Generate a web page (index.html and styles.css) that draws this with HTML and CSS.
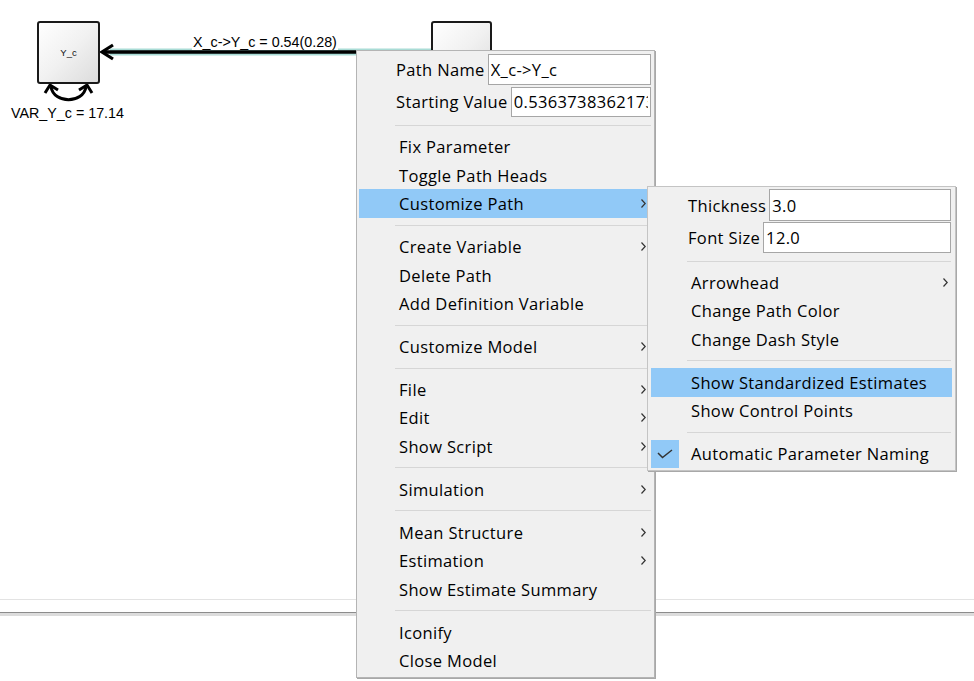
FILE: index.html
```html
<!DOCTYPE html>
<html lang="en">
<head>
<meta charset="utf-8">
<title>Path Menu</title>
<link rel="stylesheet" href="styles.css">
</head>
<body>
<div class="app">
  <div class="canvas">
    <svg class="paths" width="974" height="599" viewBox="0 0 974 599">
      <line x1="110" y1="52" x2="432" y2="52" stroke="#a9dcd6" stroke-width="7"/>
      <line x1="102" y1="52" x2="432" y2="52" stroke="#000" stroke-width="3.6"/>
      <polyline points="113,45 102,52 113,59" fill="none" stroke="#000" stroke-width="3.2"/>
      <path d="M51 87 C 54 104, 83 104, 86 87" fill="none" stroke="#000" stroke-width="3"/>
      <polyline points="45,93 50,85 58,90" fill="none" stroke="#000" stroke-width="3"/>
      <polyline points="79,90 87,85 92,93" fill="none" stroke="#000" stroke-width="3"/>
    </svg>
    <div class="node node-y"><span class="node-name">Y_c</span></div>
    <div class="node node-x"><span class="node-name">X_c</span></div>
    <div class="path-label">X_c-&gt;Y_c = 0.54(0.28)</div>
    <div class="var-label">VAR_Y_c = 17.14</div>
  </div>
  <div class="canvas-edge"></div>
  <div class="canvas-gap"></div>
  <div class="splitter"></div>
  <div class="lower"></div>

  <div class="menu main-menu">
    <div class="field-row row-a">
      <span class="field-label">Path Name</span>
      <input class="field field-name" type="text" value="X_c-&gt;Y_c">
    </div>
    <div class="field-row row-b">
      <span class="field-label">Starting Value</span>
      <input class="field field-start" type="text" value="0.5363738362173392">
    </div>
    <div class="sep"></div>
    <div class="item"><span class="label">Fix Parameter</span></div>
    <div class="item"><span class="label">Toggle Path Heads</span></div>
    <div class="item active"><span class="label">Customize Path</span><svg class="chev" width="5" height="9" viewBox="0 0 5 9"><polyline points="0.5,0.5 4.2,4.5 0.5,8.5" fill="none" stroke="#333" stroke-width="1.2"/></svg></div>
    <div class="sep"></div>
    <div class="item"><span class="label">Create Variable</span><svg class="chev" width="5" height="9" viewBox="0 0 5 9"><polyline points="0.5,0.5 4.2,4.5 0.5,8.5" fill="none" stroke="#333" stroke-width="1.2"/></svg></div>
    <div class="item"><span class="label">Delete Path</span></div>
    <div class="item"><span class="label">Add Definition Variable</span></div>
    <div class="sep"></div>
    <div class="item"><span class="label">Customize Model</span><svg class="chev" width="5" height="9" viewBox="0 0 5 9"><polyline points="0.5,0.5 4.2,4.5 0.5,8.5" fill="none" stroke="#333" stroke-width="1.2"/></svg></div>
    <div class="sep"></div>
    <div class="item"><span class="label">File</span><svg class="chev" width="5" height="9" viewBox="0 0 5 9"><polyline points="0.5,0.5 4.2,4.5 0.5,8.5" fill="none" stroke="#333" stroke-width="1.2"/></svg></div>
    <div class="item"><span class="label">Edit</span><svg class="chev" width="5" height="9" viewBox="0 0 5 9"><polyline points="0.5,0.5 4.2,4.5 0.5,8.5" fill="none" stroke="#333" stroke-width="1.2"/></svg></div>
    <div class="item"><span class="label">Show Script</span><svg class="chev" width="5" height="9" viewBox="0 0 5 9"><polyline points="0.5,0.5 4.2,4.5 0.5,8.5" fill="none" stroke="#333" stroke-width="1.2"/></svg></div>
    <div class="sep"></div>
    <div class="item"><span class="label">Simulation</span><svg class="chev" width="5" height="9" viewBox="0 0 5 9"><polyline points="0.5,0.5 4.2,4.5 0.5,8.5" fill="none" stroke="#333" stroke-width="1.2"/></svg></div>
    <div class="sep"></div>
    <div class="item"><span class="label">Mean Structure</span><svg class="chev" width="5" height="9" viewBox="0 0 5 9"><polyline points="0.5,0.5 4.2,4.5 0.5,8.5" fill="none" stroke="#333" stroke-width="1.2"/></svg></div>
    <div class="item"><span class="label">Estimation</span><svg class="chev" width="5" height="9" viewBox="0 0 5 9"><polyline points="0.5,0.5 4.2,4.5 0.5,8.5" fill="none" stroke="#333" stroke-width="1.2"/></svg></div>
    <div class="item"><span class="label">Show Estimate Summary</span></div>
    <div class="sep"></div>
    <div class="item"><span class="label">Iconify</span></div>
    <div class="item"><span class="label">Close Model</span></div>
  </div>

  <div class="menu sub-menu">
    <div class="field-row row-c">
      <span class="field-label">Thickness</span>
      <input class="field field-thick" type="text" value="3.0">
    </div>
    <div class="field-row row-d">
      <span class="field-label">Font Size</span>
      <input class="field field-font" type="text" value="12.0">
    </div>
    <div class="sep"></div>
    <div class="item"><span class="label">Arrowhead</span><svg class="chev" width="5" height="9" viewBox="0 0 5 9"><polyline points="0.5,0.5 4.2,4.5 0.5,8.5" fill="none" stroke="#333" stroke-width="1.2"/></svg></div>
    <div class="item"><span class="label">Change Path Color</span></div>
    <div class="item"><span class="label">Change Dash Style</span></div>
    <div class="sep"></div>
    <div class="item active"><span class="label">Show Standardized Estimates</span></div>
    <div class="item"><span class="label">Show Control Points</span></div>
    <div class="sep"></div>
    <div class="item checked">
      <span class="check-box"><svg width="16" height="10" viewBox="0 0 16 10"><polyline points="1,4 5.5,8.5 15,1" fill="none" stroke="#333" stroke-width="1.5"/></svg></span>
      <span class="label">Automatic Parameter Naming</span>
    </div>
  </div>
</div>
</body>
</html>
```
FILE: styles.css
```css
* { box-sizing: border-box; }
html, body { margin: 0; padding: 0; background: #fff; }
.app {
  position: relative;
  width: 974px;
  height: 681px;
  overflow: hidden;
  background: #fff;
  font-family: "Liberation Sans", Arial, sans-serif;
}
.canvas {
  position: relative;
  height: 599px;
  background: #fff;
}
.paths { position: absolute; left: 0; top: 0; }
.node {
  position: absolute;
  top: 21px;
  width: 63px;
  height: 63px;
  border: 2px solid #1a1a1a;
  border-radius: 3px;
  background: linear-gradient(135deg, #ffffff 0%, #f1f1f1 50%, #dcdcdc 100%);
  display: flex;
  align-items: center;
  justify-content: center;
}
.node-y { left: 37px; }
.node-x { left: 431px; width: 61px; }
.node-name { font-size: 9.5px; color: #111; }
.path-label {
  position: absolute;
  left: 192px;
  top: 35px;
  height: 15px;
  line-height: 15px;
  padding: 0 1px;
  background: #fff;
  font-size: 14.3px;
  color: #000;
  white-space: nowrap;
}
.var-label {
  position: absolute;
  left: 11px;
  top: 106px;
  line-height: 15px;
  font-size: 14.3px;
  color: #000;
  white-space: nowrap;
}
.canvas-edge { height: 1px; background: #e3e3e3; }
.canvas-gap { height: 12px; }
.splitter { height: 4px; border-top: 1px solid #8c8c8c; background: #dcdcdc; }
.lower { height: 65px; }

.menu {
  position: absolute;
  background: #f0f0f0;
  border: 1px solid #b4b4b4;
  box-shadow: 1px 1px 0 #a8a8a8;
  font-family: "Open Sans", "Noto Sans", sans-serif;
  font-size: 16.5px;
  letter-spacing: 0.35px;
  color: #000;
  display: flex;
  flex-direction: column;
}
.main-menu {
  left: 356px;
  top: 50px;
  width: 299px;
  height: 628px;
  padding: 2px 2px 2px 2px;
}
.sub-menu {
  left: 647px;
  top: 186px;
  width: 309px;
  height: 285px;
  padding: 2px 3px;
  border-color: #c4c4c4;
}
.field-row {
  display: flex;
  align-items: center;
  padding-left: 37px;
  padding-right: 1px;
}
.field-label { white-space: nowrap; margin-right: 3px; }
.field {
  font: inherit;
  letter-spacing: inherit;
  color: #000;
  background: #fff;
  border: 1px solid #a6a6a6;
  padding: 0 2px;
  margin: 0;
  outline: none;
  flex: 1;
  min-width: 0;
}
.row-a { height: 33px; }
.row-a .field { height: 31px; }
.row-b { height: 32px; }
.row-b .field { height: 30px; }
.row-c { height: 33px; }
.row-c .field { height: 32px; }
.row-d { height: 32px; }
.row-d .field { height: 31px; }
.sep {
  height: 14.6px;
  display: flex;
  align-items: center;
  padding-left: 36px;
  padding-right: 1px;
}
.sep::before {
  content: "";
  display: block;
  height: 1px;
  width: 100%;
  background: #d6d6d6;
}
.item {
  height: 28.5px;
  display: flex;
  align-items: center;
  padding-left: 40px;
  padding-right: 6px;
  white-space: nowrap;
}
.item.active { background: #91c9f7; }
.label { flex: 1; }
.chev { flex: none; }
.sub-menu .item { padding-right: 4px; }
.item.checked { padding-left: 0; }
.check-box {
  width: 28px;
  height: 28px;
  margin-right: 12px;
  background: #91c9f7;
  display: flex;
  align-items: center;
  justify-content: center;
}
```
